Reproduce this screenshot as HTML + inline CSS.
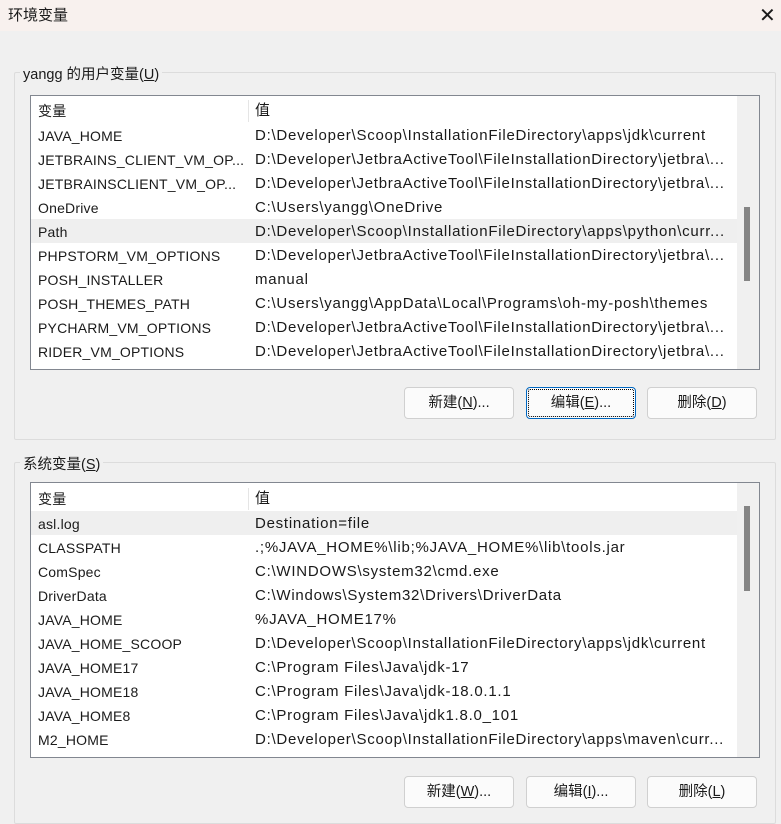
<!DOCTYPE html>
<html><head><meta charset="utf-8"><style>
body{margin:0;width:781px;height:813px;background:#f0f0f0;font-family:"Liberation Sans","Noto Sans CJK SC",sans-serif;font-size:14px;color:#1a1a1a;position:relative;overflow:hidden}
.a{position:absolute}
.title{left:0;top:0;width:781px;height:31px;background:#f8f1ee}
.grp{border:1px solid #dcdcdc;border-radius:2px}
.lbl{background:#f0f0f0;padding:0 3px;white-space:nowrap;font-size:14.5px}
.list{background:#fff;border:1px solid #828790;overflow:hidden}
.row{position:absolute;left:0;width:706px;height:24px;line-height:24px;white-space:nowrap}
.row span{position:absolute}
.c1{left:7px;top:1px;letter-spacing:0.2px;font-size:14px}.c2{left:224px;top:1px;font-size:15px;letter-spacing:0.75px}
.hl{background:#efefef}
.sb{position:absolute;right:0;top:0;width:22px;bottom:0;background:#f0f0f0}
.th{position:absolute;left:7px;width:6px;background:#858585}
.btn{position:absolute;width:108px;height:30px;border:1px solid #d0d0d0;border-radius:4px;background:#fbfbfb;text-align:center;line-height:30px;font-size:14.5px}
.btn.f{border-color:#0067c0;outline:1px dotted #000;outline-offset:-3px}
u{text-decoration:underline}
</style></head><body>
<div class="a title"></div>
<div class="a" style="left:8px;top:4px;font-size:15px">环境变量</div>
<div class="a" style="left:759px;top:3px;font-size:20px;font-weight:300">✕</div>

<div class="a grp" style="left:14px;top:72px;width:760px;height:366px"></div>
<div class="a lbl" style="left:20px;top:63px">yangg 的用户变量(<u>U</u>)</div>
<div class="a list" style="left:30px;top:95px;width:728px;height:273px">
 <div class="row" style="top:2px"><span class="c1">变量</span><span class="c2" style="letter-spacing:0">值</span><span style="position:absolute;left:217px;top:2px;width:1px;height:22px;background:#e5e5e5"></span></div>
 <div class="row" style="top:27px"><span class="c1">JAVA_HOME</span><span class="c2">D:\Developer\Scoop\InstallationFileDirectory\apps\jdk\current</span></div>
 <div class="row" style="top:51px"><span class="c1">JETBRAINS_CLIENT_VM_OP...</span><span class="c2">D:\Developer\JetbraActiveTool\FileInstallationDirectory\jetbra\...</span></div>
 <div class="row" style="top:75px"><span class="c1">JETBRAINSCLIENT_VM_OP...</span><span class="c2">D:\Developer\JetbraActiveTool\FileInstallationDirectory\jetbra\...</span></div>
 <div class="row" style="top:99px"><span class="c1">OneDrive</span><span class="c2">C:\Users\yangg\OneDrive</span></div>
 <div class="row hl" style="top:123px"><span class="c1">Path</span><span class="c2">D:\Developer\Scoop\InstallationFileDirectory\apps\python\curr...</span></div>
 <div class="row" style="top:147px"><span class="c1">PHPSTORM_VM_OPTIONS</span><span class="c2">D:\Developer\JetbraActiveTool\FileInstallationDirectory\jetbra\...</span></div>
 <div class="row" style="top:171px"><span class="c1">POSH_INSTALLER</span><span class="c2">manual</span></div>
 <div class="row" style="top:195px"><span class="c1">POSH_THEMES_PATH</span><span class="c2">C:\Users\yangg\AppData\Local\Programs\oh-my-posh\themes</span></div>
 <div class="row" style="top:219px"><span class="c1">PYCHARM_VM_OPTIONS</span><span class="c2">D:\Developer\JetbraActiveTool\FileInstallationDirectory\jetbra\...</span></div>
 <div class="row" style="top:243px"><span class="c1">RIDER_VM_OPTIONS</span><span class="c2">D:\Developer\JetbraActiveTool\FileInstallationDirectory\jetbra\...</span></div>
 <div class="sb"><div class="th" style="top:111px;height:74px"></div></div>
</div>
<div class="btn" style="left:404px;top:387px">新建(<u>N</u>)...</div>
<div class="btn f" style="left:526px;top:387px">编辑(<u>E</u>)...</div>
<div class="btn" style="left:647px;top:387px">删除(<u>D</u>)</div>

<div class="a grp" style="left:14px;top:462px;width:760px;height:360px"></div>
<div class="a lbl" style="left:20px;top:453px">系统变量(<u>S</u>)</div>
<div class="a list" style="left:30px;top:482px;width:728px;height:274px">
 <div class="row" style="top:3px"><span class="c1">变量</span><span class="c2" style="letter-spacing:0">值</span><span style="position:absolute;left:217px;top:2px;width:1px;height:22px;background:#e5e5e5"></span></div>
 <div class="row hl" style="top:28px"><span class="c1">asl.log</span><span class="c2">Destination=file</span></div>
 <div class="row" style="top:52px"><span class="c1">CLASSPATH</span><span class="c2">.;%JAVA_HOME%\lib;%JAVA_HOME%\lib\tools.jar</span></div>
 <div class="row" style="top:76px"><span class="c1">ComSpec</span><span class="c2">C:\WINDOWS\system32\cmd.exe</span></div>
 <div class="row" style="top:100px"><span class="c1">DriverData</span><span class="c2">C:\Windows\System32\Drivers\DriverData</span></div>
 <div class="row" style="top:124px"><span class="c1">JAVA_HOME</span><span class="c2">%JAVA_HOME17%</span></div>
 <div class="row" style="top:148px"><span class="c1">JAVA_HOME_SCOOP</span><span class="c2">D:\Developer\Scoop\InstallationFileDirectory\apps\jdk\current</span></div>
 <div class="row" style="top:172px"><span class="c1">JAVA_HOME17</span><span class="c2">C:\Program Files\Java\jdk-17</span></div>
 <div class="row" style="top:196px"><span class="c1">JAVA_HOME18</span><span class="c2">C:\Program Files\Java\jdk-18.0.1.1</span></div>
 <div class="row" style="top:220px"><span class="c1">JAVA_HOME8</span><span class="c2">C:\Program Files\Java\jdk1.8.0_101</span></div>
 <div class="row" style="top:244px"><span class="c1">M2_HOME</span><span class="c2">D:\Developer\Scoop\InstallationFileDirectory\apps\maven\curr...</span></div>
 <div class="sb"><div class="th" style="top:23px;height:85px"></div></div>
</div>
<div class="btn" style="left:404px;top:776px">新建(<u>W</u>)...</div>
<div class="btn" style="left:526px;top:776px">编辑(<u>I</u>)...</div>
<div class="btn" style="left:647px;top:776px">删除(<u>L</u>)</div>
</body></html>
